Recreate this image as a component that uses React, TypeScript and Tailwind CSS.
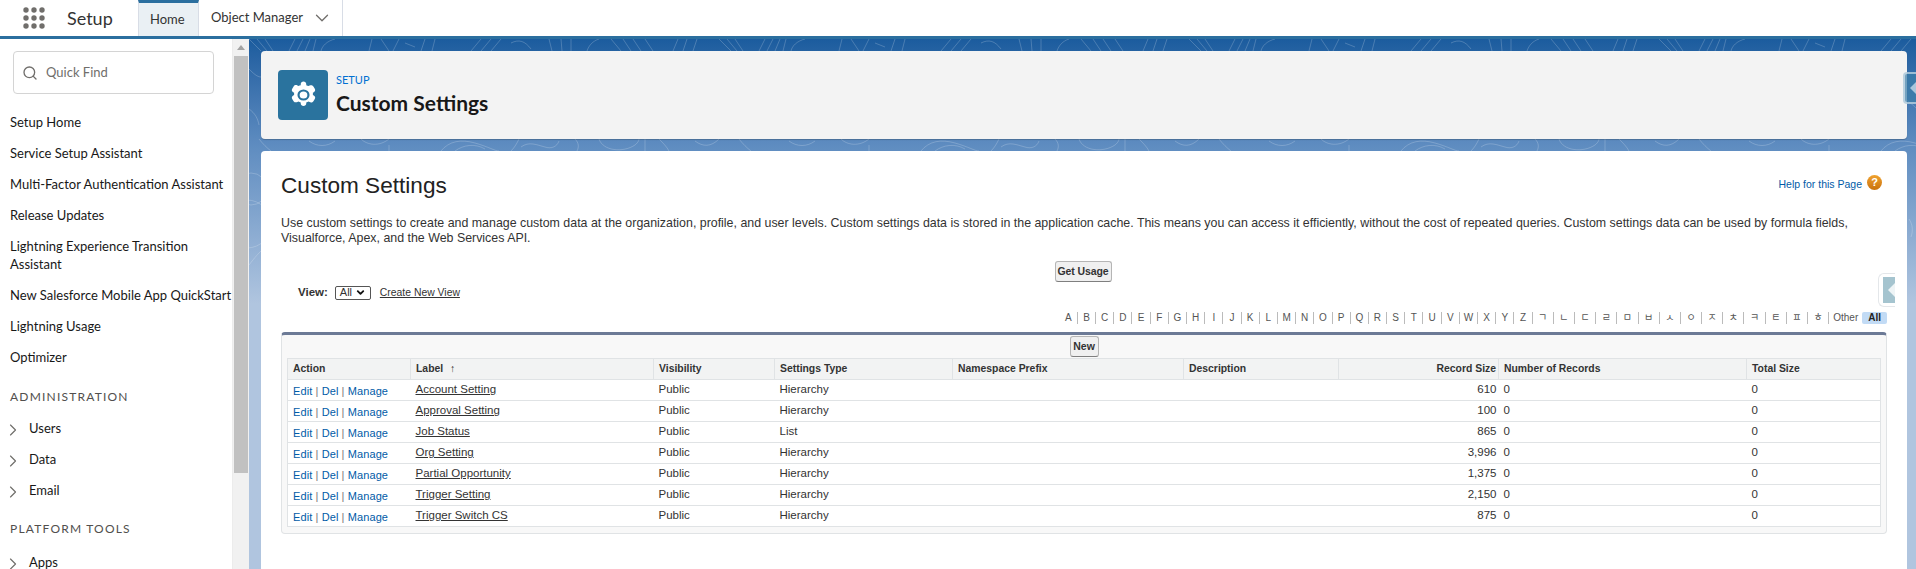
import React from "react";
import { ChevronDown, ChevronRight, Search } from "lucide-react";

const topItems = [
  "Setup Home",
  "Service Setup Assistant",
  "Multi-Factor Authentication Assistant",
  "Release Updates",
  "Lightning Experience Transition Assistant",
  "New Salesforce Mobile App QuickStart",
  "Lightning Usage",
  "Optimizer",
];

const rows = [
  { label: "Account Setting", type: "Hierarchy", size: "610" },
  { label: "Approval Setting", type: "Hierarchy", size: "100" },
  { label: "Job Status", type: "List", size: "865" },
  { label: "Org Setting", type: "Hierarchy", size: "3,996" },
  { label: "Partial Opportunity", type: "Hierarchy", size: "1,375" },
  { label: "Trigger Setting", type: "Hierarchy", size: "2,150" },
  { label: "Trigger Switch CS", type: "Hierarchy", size: "875" },
];

const latin = "ABCDEFGHIJKLMNOPQRSTUVWXYZ".split("");
const korean = "ㄱㄴㄷㄹㅁㅂㅅㅇㅈㅊㅋㅌㅍㅎ".split("");

const AppsIcon = () => (
  <svg width="22" height="22" viewBox="0 0 22 22" fill="#706e6b">
    {[3, 11, 19].map((y) =>
      [3, 11, 19].map((x) => <circle key={`${x}-${y}`} cx={x} cy={y} r="2.7" />)
    )}
  </svg>
);

const GearIcon = () => (
  <svg width="33" height="30" viewBox="0 0 24 24" preserveAspectRatio="none" fill="white">
    <path
      fillRule="evenodd"
      d="M12 1.2c1.1 0 2 .9 2 2v.9c.6.2 1.2.4 1.7.7l.7-.4c1-.6 2.2-.2 2.8.7l1 1.8c.6 1 .2 2.2-.7 2.8l-.7.4c.1.6.1 1.2 0 1.8l.7.4c1 .6 1.3 1.8.7 2.8l-1 1.8c-.6 1-1.8 1.3-2.8.7l-.7-.4c-.5.3-1.1.6-1.7.7v.9c0 1.1-.9 2-2 2s-2-.9-2-2v-.9c-.6-.2-1.2-.4-1.7-.7l-.7.4c-1 .6-2.2.2-2.8-.7l-1-1.8c-.6-1-.2-2.2.7-2.8l.7-.4c-.1-.6-.1-1.2 0-1.8l-.7-.4c-1-.6-1.3-1.8-.7-2.8l1-1.8c.6-1 1.8-1.3 2.8-.7l.7.4c.5-.3 1.1-.6 1.7-.7v-.9c0-1.1.9-2 2-2zM12 7.6a4.4 4.4 0 1 0 0 8.8 4.4 4.4 0 0 0 0-8.8z"
    />
    <circle cx="12" cy="12" r="2.8" />
  </svg>
);

// hand-placed scraps of the contour wallpaper, repeated along the two visible bands
const topBand = [
  "M0 0l12 12M8 0l10 12M16 0l8 12",
  "M40 12l6-12M48 12l6-12M56 12l5-12M64 12l3-12M72 12c1-5 6-10 14-12",
  "M120 12l3-12M132 0l8 12M144 12l6-12M156 4l10 4M176 0l-4 12M186 0l-3 12",
  "M222 12l10-12M232 12l10-12M242 12l10-12M262 4c8-4 14-2 20 6",
  "M300 0l3 12M312 0l1 12M322 0v12M338 12c2-6 6-10 12-12",
  "M362 0l10 12M374 0l8 12M384 0l8 12M396 0l8 12M424 12l5-12M434 12l4-12M444 12l4-12",
];

const midBand = [
  "M10 0c4 5 8 9 12 12M60 2c8 6 18 6 26 0M112 0c6 6 18 8 28 0",
  "M140 6v6M192 12c8-10 20-12 34-8 14 4 20 8 24 8M206 12c8-6 20-8 30-2",
  "M262 12c4-4 6-8 8-12M272 8c8-6 16-2 24 0 6 2 12 0 14-6M326 0c4 4 4 8 2 12",
  "M350 0c4 12 24 14 36 6 4-3 4-6 4-6M396 0v12M410 0c4 4 8 8 10 12M446 2c8 6 16 6 24-2",
];

const Contours = () => (
  <svg
    className="absolute inset-0 h-full w-full"
    width="1667"
    height="530"
    fill="none"
    stroke="white"
    strokeOpacity="0.2"
    strokeWidth="1"
  >
    {[0, 1, 2, 3].map((n) => (
      <g key={n}>
        <g transform={`translate(${n * 470},0)`}>
          {topBand.map((d) => (
            <path key={d} d={d} />
          ))}
        </g>
        <g transform={`translate(${n * 480},100)`}>
          {midBand.map((d) => (
            <path key={d} d={d} />
          ))}
        </g>
      </g>
    ))}
    <circle cx="2" cy="150" r="16" />
    <circle cx="-2" cy="185" r="24" />
    <path d="M0 70c6 4 9 10 10 16M0 226c6-8 10-12 12-14M0 30c4 4 8 8 12 8" />
    <path d="M1660 180c4 6 4 12 2 18M1656 60c6 4 10 8 12 10" />
  </svg>
);

const UtilButton = ({ children, className }: { children: React.ReactNode; className: string }) => (
  <button
    className={`rounded-[3px] border border-[#b5b5b5] border-b-[#7f7f7f] bg-[#f0f0f0] text-[10.5px] font-bold text-[#333] ${className}`}
  >
    {children}
  </button>
);

const TreeRow = ({ label }: { label: string }) => (
  <div className="flex h-[31px] items-center gap-[6px] text-[13px] leading-[18px] text-[#181818]">
    <ChevronRight size={20} strokeWidth={1.4} className="-ml-[7px] translate-y-[2px] text-[#706e6b]" />
    {label}
  </div>
);

function Sidebar() {
  return (
    <aside className="flex w-[249px] shrink-0 overflow-hidden bg-white font-['Lato',sans-serif]">
      <div className="w-[233px] shrink-0 border-r border-[#ececec] pl-[10px]">
        <div className="ml-[3px] mt-[12px] flex h-[43px] w-[201px] items-center gap-[8px] rounded-[4px] border border-[#d4d4d4] pl-[8px] pt-[1px] text-[13px] text-[#706e6b]">
          <Search size={16} strokeWidth={2} />
          Quick Find
        </div>
        <ul className="mt-[12.5px] w-[224px] text-[13px] leading-[18px] text-[#181818]">
          {topItems.map((item) => (
            <li key={item} className="py-[6.5px]">
              {item}
            </li>
          ))}
        </ul>
        <div className="mt-[15px] text-[12px] leading-[18px] tracking-[1.2px] text-[#514f4d]">ADMINISTRATION</div>
        <div className="mt-[7px]">
          {["Users", "Data", "Email"].map((item) => (
            <TreeRow key={item} label={item} />
          ))}
        </div>
        <div className="mt-[14.5px] text-[12px] leading-[18px] tracking-[1.2px] text-[#514f4d]">PLATFORM TOOLS</div>
        <div className="mt-[8.5px]">
          <TreeRow label="Apps" />
        </div>
      </div>
      <div className="flex w-[16px] flex-col items-center bg-[#f1f1f1]">
        <div className="mt-[6px] h-0 w-0 border-x-[4px] border-b-[5px] border-x-transparent border-b-[#a3a3a3]" />
        <div className="mt-[6px] h-[417px] w-[14px] bg-[#c1c1c1]" />
      </div>
    </aside>
  );
}

function ListTable() {
  const th = "border-r border-[#e0e3e5] px-[5px] text-left font-bold";
  return (
    <table className="w-full table-fixed border-collapse border border-[#e0e3e5] bg-white text-[11.5px] leading-[16px] text-[#333]">
      <colgroup>
        <col className="w-[123px]" />
        <col className="w-[243px]" />
        <col className="w-[121px]" />
        <col className="w-[178px]" />
        <col className="w-[231px]" />
        <col className="w-[155px]" />
        <col className="w-[160px]" />
        <col className="w-[248px]" />
        <col />
      </colgroup>
      <thead>
        <tr className="h-[21px] border-b border-[#e0e3e5] bg-[#f2f3f3] text-[10.4px]">
          <th className={th}>Action</th>
          <th className={th}>
            Label <span className="ml-[4px] font-bold">↑</span>
          </th>
          <th className={th}>Visibility</th>
          <th className={th}>Settings Type</th>
          <th className={th}>Namespace Prefix</th>
          <th className={th}>Description</th>
          <th className="border-r border-[#e0e3e5] pr-[2px] text-right font-bold">Record Size</th>
          <th className={th}>Number of Records</th>
          <th className="px-[5px] text-left font-bold">Total Size</th>
        </tr>
      </thead>
      <tbody>
        {rows.map((row) => (
          <tr key={row.label} className="h-[21px] border-b border-[#e0e3e5]">
            <td className="px-[5px] pt-[2px] text-[11px] tracking-[0.1px] text-[#015ba7]">
              Edit <span className="text-[#777]">|</span> Del <span className="text-[#777]">|</span> Manage
            </td>
            <td className="px-[5px] pb-[2px]">
              <span className="underline">{row.label}</span>
            </td>
            <td className="px-[5px] pb-[2px]">Public</td>
            <td className="px-[5px] pb-[2px]">{row.type}</td>
            <td />
            <td />
            <td className="pr-[2px] pb-[2px] text-right">{row.size}</td>
            <td className="px-[5px] pb-[2px]">0</td>
            <td className="px-[5px] pb-[2px]">0</td>
          </tr>
        ))}
      </tbody>
    </table>
  );
}

export default function App() {
  return (
    <div className="flex h-[569px] w-[1916px] flex-col overflow-hidden bg-white font-['Liberation_Sans',sans-serif]">
      <header className="flex h-[39px] shrink-0 items-stretch border-b-[3px] border-[#2b6f9f] font-['Lato',sans-serif]">
        <div className="ml-[23px] flex items-center">
          <AppsIcon />
        </div>
        <div className="ml-[22px] flex w-[71px] items-center text-[18px] text-[#333]">Setup</div>
        <div className="flex w-[61px] items-center border-x border-t-[3px] border-[#d8dde6] border-t-[#2b6f9f] bg-[#eaf0f4] pl-[11px] text-[13px] text-[#333]">
          Home
        </div>
        <div className="flex items-center border-r border-[#d8dde6] pl-[12px] pr-[9px] text-[13px] text-[#333]">
          Object Manager
          <ChevronDown size={22} strokeWidth={1.4} className="ml-[8px] text-[#706e6b]" />
        </div>
      </header>

      <div className="flex min-h-0 flex-1">
        <Sidebar />
        <main className="relative min-w-0 flex-1 overflow-hidden bg-gradient-to-b from-[#1b5c9e] via-[#5e8cc0] via-[20%] to-[#b0c5df] to-[50%] pl-[12px] pr-[9px] pt-[12px]">
          <Contours />

          <section className="relative flex h-[88px] items-center rounded-[4px] bg-[#f3f3f3] pl-[17px] shadow-[0_1px_1px_rgba(0,0,0,0.2)] font-['Lato',sans-serif]">
            <div className="flex h-[50px] w-[50px] items-center justify-center rounded-[4px] bg-[#2a739e]">
              <GearIcon />
            </div>
            <div className="ml-[8px]">
              <div className="text-[11px] leading-[16px] text-[#0070d2]">SETUP</div>
              <div className="text-[21px] font-bold leading-[30px] text-[#181818]">Custom Settings</div>
            </div>
          </section>

          <section className="relative mt-[12px] h-[420px] rounded-t-[4px] bg-white px-[20px]">
            <div className="flex items-start justify-between pt-[20px]">
              <h1 className="text-[22.6px] leading-[30px] text-[#222]">Custom Settings</h1>
              <div className="mr-[5px] mt-[1px] flex items-center gap-[5px] text-[10.5px] text-[#015ba7]">
                <span className="mt-[5px]">Help for this Page</span>
                <span className="flex h-[15px] w-[15px] items-center justify-center rounded-full bg-gradient-to-b from-[#f0a22e] to-[#c9720c] text-[11px] font-bold text-white">
                  ?
                </span>
              </div>
            </div>
            <p className="mt-[15px] pr-[20px] text-[12.4px] leading-[15px] text-[#333]">
              Use custom settings to create and manage custom data at the organization, profile, and user levels. Custom settings data is stored in the application cache. This means you can access it efficiently, without the cost of repeated queries. Custom settings data can be used by formula fields, Visualforce, Apex, and the Web Services API.
            </p>
            <div className="mt-[15px] flex justify-center pr-[2px]">
              <UtilButton className="h-[21px] w-[57px] tracking-[-0.1px]">Get Usage</UtilButton>
            </div>
            <div className="mt-[2px] flex items-center pl-[17px]">
              <span className="text-[11.5px] font-bold text-[#333]">View:</span>
              <span className="ml-[7px] flex h-[14px] w-[36px] items-center gap-[3px] rounded-[2px] border border-[#555] pl-[4px] text-[11px] text-[#333]">
                All
                <ChevronDown size={11} strokeWidth={4} className="text-[#111]" />
              </span>
              <span className="ml-[9px] text-[10.4px] text-[#333] underline">Create New View</span>
            </div>
            <div className="mt-[11px] flex h-[12px] items-center justify-end text-[10px] text-[#555] font-['Liberation_Sans','Noto_Sans_CJK_KR',sans-serif]">
              {latin.map((c) => (
                <span key={c} className="w-[18.2px] border-r border-[#bbb] text-center leading-[12px]">
                  {c}
                </span>
              ))}
              {korean.map((c) => (
                <span key={c} className="w-[21.2px] border-r border-[#bbb] text-center leading-[12px]">
                  {c}
                </span>
              ))}
              <span className="px-[4px] leading-[12px]">Other</span>
              <span className="h-[12px] rounded-[2px] bg-[#c2dbf5] px-[6px] font-bold leading-[12px] text-[#222]">All</span>
            </div>
            <div className="mt-[8px] rounded-[4px] border border-t-[3px] border-[#e0e3e5] border-t-[#6c7a96] bg-[#f8f8f8] px-[5px] pb-[6px]">
              <div className="flex h-[23px] items-center justify-center">
                <UtilButton className="h-[21px] w-[29px]">New</UtilButton>
              </div>
              <ListTable />
            </div>
          </section>

          <div className="absolute right-0 top-[33px] flex h-[32px] w-[13px] items-center rounded-l border-[2px] border-r-0 border-white/50 bg-[#3c7ea8]/70 pl-[5px]">
            <div className="h-0 w-0 border-y-[6px] border-r-[6px] border-y-transparent border-r-[#a9c6dc]" />
          </div>
          <div className="absolute right-[21px] top-[234px] flex h-[34px] w-[17px] items-center rounded-l-[6px] border border-r-0 border-[#e4e7ea] bg-white pl-[4px]">
            <div className="flex h-[26px] w-full items-center justify-end bg-[#a5c4cf]">
              <div className="h-0 w-0 border-y-[7px] border-r-[7px] border-y-transparent border-r-[#eef4f6]" />
            </div>
          </div>
        </main>
      </div>
    </div>
  );
}
